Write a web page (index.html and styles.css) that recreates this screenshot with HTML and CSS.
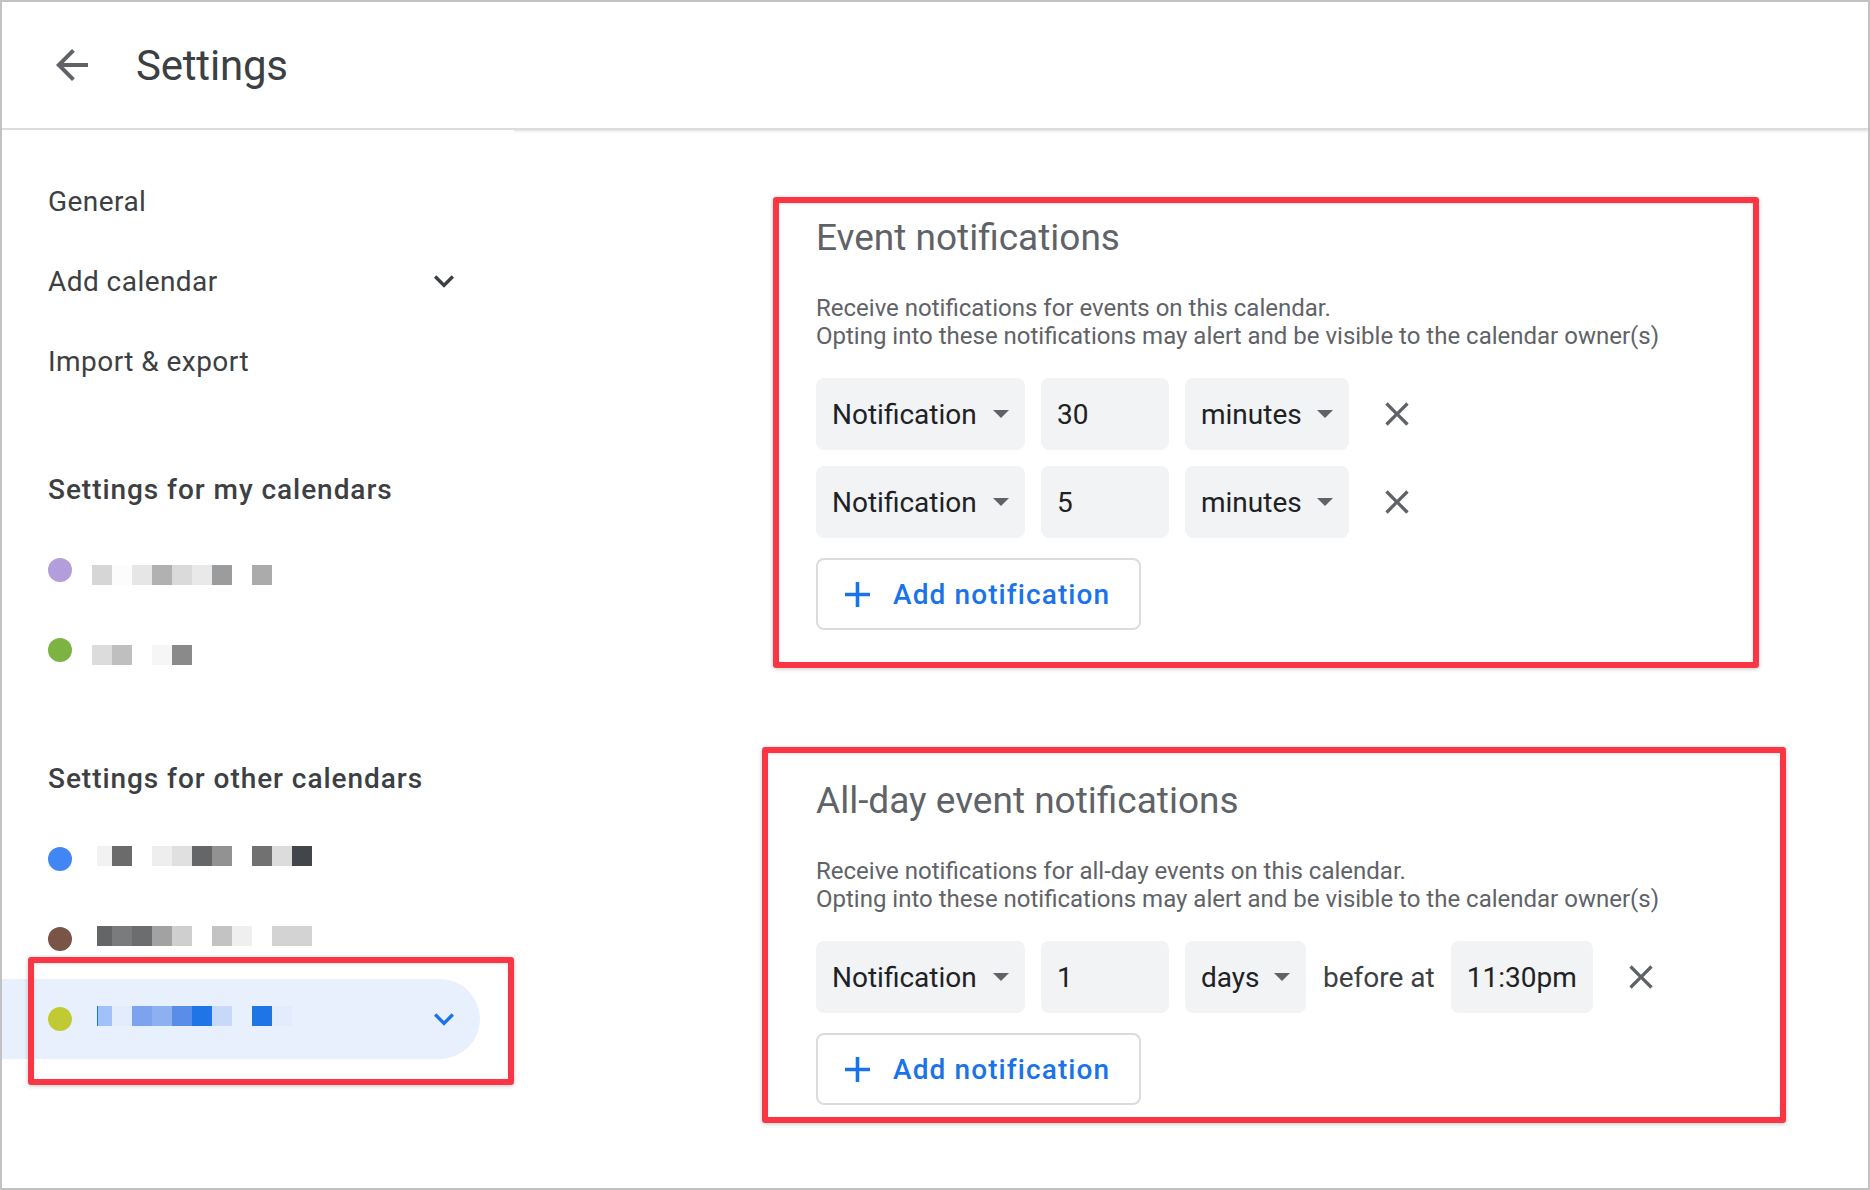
FILE: index.html
```html
<!DOCTYPE html>
<html lang="en">
<head>
<meta charset="utf-8">
<title>Settings</title>
<link rel="stylesheet" href="styles.css">
</head>
<body>
<div class="frame">
  <header class="topbar">
    <button class="icon-btn back" aria-label="Back">
      <svg viewBox="0 0 24 24" width="48" height="48"><path d="M20 11H7.830l5.590-5.590L12 4l-8 8 8 8 1.410-1.410L7.830 13H20v-2z"/></svg>
    </button>
    <h1 class="title">Settings</h1>
  </header>

  <div class="layout">
    <nav class="sidebar">
      <ul class="nav">
        <li class="nav-item">General</li>
        <li class="nav-item">Add calendar
          <span class="chev"><svg viewBox="0 0 24 24" width="40" height="40"><path d="M16.59 8.59L12 13.17 7.41 8.59 6 10l6 6 6-6z"/></svg></span>
        </li>
        <li class="nav-item">Import &amp; export</li>
      </ul>

      <div class="group">
        <h2 class="group-title">Settings for my calendars</h2>
        <div class="cal-row"><span class="dot dot-purple"></span><span class="pix pix-purple low"></span></div>
        <div class="cal-row"><span class="dot dot-green"></span><span class="pix pix-green low"></span></div>
      </div>

      <div class="group">
        <h2 class="group-title">Settings for other calendars</h2>
        <div class="cal-row"><span class="dot dot-blue"></span><span class="pix pix-blue high"></span></div>
        <div class="cal-row"><span class="dot dot-brown"></span><span class="pix pix-brown high"></span></div>
        <div class="cal-row selected"><span class="dot dot-lime"></span><span class="pix pix-lime high"></span>
          <span class="chev blue"><svg viewBox="0 0 24 24" width="40" height="40"><path d="M16.59 8.59L12 13.17 7.41 8.59 6 10l6 6 6-6z"/></svg></span>
        </div>
      </div>
    </nav>

    <main class="content">
      <section class="panel">
        <h3 class="panel-title">Event notifications</h3>
        <p class="panel-desc">Receive notifications for events on this calendar.<br>Opting into these notifications may alert and be visible to the calendar owner(s)</p>
        <div class="rows">
          <div class="row">
            <div class="field w-type"><span>Notification</span><svg class="caret" viewBox="7 10 10 5" width="16" height="8"><path d="M7 10l5 5 5-5z"/></svg></div>
            <div class="field w-num"><span>30</span></div>
            <div class="field w-min"><span>minutes</span><svg class="caret" viewBox="7 10 10 5" width="16" height="8"><path d="M7 10l5 5 5-5z"/></svg></div>
            <button class="icon-btn close" aria-label="Remove"><svg viewBox="0 0 24 24" width="40" height="40"><path d="M19 6.41L17.59 5 12 10.59 6.41 5 5 6.41 10.59 12 5 17.59 6.41 19 12 13.41 17.59 19 19 17.59 13.41 12z"/></svg></button>
          </div>
          <div class="row">
            <div class="field w-type"><span>Notification</span><svg class="caret" viewBox="7 10 10 5" width="16" height="8"><path d="M7 10l5 5 5-5z"/></svg></div>
            <div class="field w-num"><span>5</span></div>
            <div class="field w-min"><span>minutes</span><svg class="caret" viewBox="7 10 10 5" width="16" height="8"><path d="M7 10l5 5 5-5z"/></svg></div>
            <button class="icon-btn close" aria-label="Remove"><svg viewBox="0 0 24 24" width="40" height="40"><path d="M19 6.41L17.59 5 12 10.59 6.41 5 5 6.41 10.59 12 5 17.59 6.41 19 12 13.41 17.59 19 19 17.59 13.41 12z"/></svg></button>
          </div>
        </div>
        <button class="add-btn"><svg viewBox="5 5 14 14" width="25" height="25"><path d="M19 13h-6v6h-2v-6H5v-2h6V5h2v6h6v2z"/></svg><span>Add notification</span></button>
      </section>

      <section class="panel">
        <h3 class="panel-title">All-day event notifications</h3>
        <p class="panel-desc">Receive notifications for all-day events on this calendar.<br>Opting into these notifications may alert and be visible to the calendar owner(s)</p>
        <div class="rows">
          <div class="row">
            <div class="field w-type"><span>Notification</span><svg class="caret" viewBox="7 10 10 5" width="16" height="8"><path d="M7 10l5 5 5-5z"/></svg></div>
            <div class="field w-num"><span>1</span></div>
            <div class="field w-days"><span>days</span><svg class="caret" viewBox="7 10 10 5" width="16" height="8"><path d="M7 10l5 5 5-5z"/></svg></div>
            <span class="row-text">before at</span>
            <div class="field w-time"><span>11:30pm</span></div>
            <button class="icon-btn close" aria-label="Remove"><svg viewBox="0 0 24 24" width="40" height="40"><path d="M19 6.41L17.59 5 12 10.59 6.41 5 5 6.41 10.59 12 5 17.59 6.41 19 12 13.41 17.59 19 19 17.59 13.41 12z"/></svg></button>
          </div>
        </div>
        <button class="add-btn"><svg viewBox="5 5 14 14" width="25" height="25"><path d="M19 13h-6v6h-2v-6H5v-2h6V5h2v6h6v2z"/></svg><span>Add notification</span></button>
      </section>
    </main>
  </div>

  <div class="annot annot-1"></div>
  <div class="annot annot-2"></div>
  <div class="annot annot-3"></div>
</div>
</body>
</html>
```

FILE: styles.css
```css
* { box-sizing: border-box; }

html, body {
  margin: 0;
  padding: 0;
  background: #ffffff;
}

body {
  font-family: Roboto, "Liberation Sans", Arial, sans-serif;
  color: #3c4043;
}

.frame {
  position: relative;
  width: 1870px;
  height: 1190px;
  border: 2px solid #c2c2c2;
  overflow: hidden;
  background: #ffffff;
}

/* ---------- header ---------- */
.topbar {
  height: 128px;
  display: flex;
  align-items: center;
  gap: 40px;
  padding-left: 46px;
  border-bottom: 2px solid #dadce0;
}

.icon-btn {
  border: 0;
  background: transparent;
  padding: 0;
  width: 48px;
  height: 48px;
  display: flex;
  align-items: center;
  justify-content: center;
  fill: #5f6368;
  cursor: pointer;
}

.back svg { fill: #5f6368; }

.title {
  margin: 0;
  font-size: 42px;
  font-weight: 400;
  color: #3c4043;
  letter-spacing: -0.2px;
}

/* ---------- layout ---------- */
.layout {
  display: flex;
  height: calc(100% - 128px);
}

.sidebar {
  width: 512px;
  flex: none;
  padding-top: 31px;
}

.nav {
  list-style: none;
  margin: 0;
  padding: 0;
  width: 478px;
}

.nav-item {
  height: 80px;
  display: flex;
  align-items: center;
  justify-content: space-between;
  padding: 0 12px 0 46px;
  font-size: 28px;
  letter-spacing: 0.45px;
  color: #3c4043;
}

.chev {
  width: 48px;
  height: 48px;
  display: flex;
  align-items: center;
  justify-content: center;
  fill: #3c4043;
}
.chev.blue { fill: #1a73e8; margin-left: auto; }

.group {
  margin-top: 49px;
  width: 478px;
}

.group-title {
  margin: 0;
  height: 80px;
  line-height: 80px;
  padding-left: 46px;
  font-size: 28px;
  font-weight: 500;
  letter-spacing: 0.95px;
  color: #3c4043;
}

.cal-row {
  height: 80px;
  display: flex;
  align-items: center;
  padding: 0 12px 0 46px;
}

.cal-row.selected {
  background: #e8f0fe;
  border-radius: 0 40px 40px 0;
}

.dot {
  width: 24px;
  height: 24px;
  border-radius: 50%;
  flex: none;
}
.dot-purple { background: #b39ddb; }
.dot-green { background: #7cb342; }
.dot-blue { background: #4285f4; }
.dot-brown { background: #795548; }
.dot-lime { background: #c0ca33; }

.pix {
  height: 20px;
  flex: none;
}
.pix.low { margin-left: 20px; margin-top: 10px; }
.pix.high { margin-left: 25px; margin-bottom: 6px; }

.pix-purple {
  width: 180px;
  background: linear-gradient(to right,
    #d5d6d5 0 20px, #fcfcfc 20px 40px, #e6e6e6 40px 60px, #b1b1b1 60px 80px,
    #dadada 80px 100px, #e8e9e8 100px 120px, #9b9c9d 120px 140px,
    #ffffff 140px 160px, #ababab 160px 180px);
}
.pix-green {
  width: 100px;
  background: linear-gradient(to right,
    #dcdcdc 0 20px, #bebfbe 20px 40px, #ffffff 40px 60px, #f5f6f5 60px 80px,
    #8a8a8b 80px 100px);
}
.pix-blue {
  width: 215px;
  background: linear-gradient(to right,
    #f2f2f2 0 15px, #6b6b6b 15px 35px, #ffffff 35px 55px, #eeeeee 55px 75px,
    #e0e0e0 75px 95px, #646667 95px 115px, #929292 115px 135px,
    #ffffff 135px 155px, #717171 155px 175px, #dcdcdc 175px 195px,
    #424549 195px 215px);
}
.pix-brown {
  width: 215px;
  background: linear-gradient(to right,
    #646566 0 15px, #7a7b7c 15px 35px, #6c6d6f 35px 55px, #a2a2a2 55px 75px,
    #cfcfcf 75px 95px, #ffffff 95px 115px, #c3c3c3 115px 135px,
    #efefef 135px 155px, #ffffff 155px 175px, #d3d3d3 175px 215px);
}
.pix-lime {
  width: 215px;
  background: linear-gradient(to right,
    #1a73e8 0 1px, #a0c2f8 1px 15px, #e3ecfc 15px 35px, #7ba3ee 35px 55px,
    #8db0f0 55px 75px, #5a8dea 75px 95px, #1f75e6 95px 115px,
    #c6d9f8 115px 135px, transparent 135px 155px, #1f75e6 155px 175px,
    #e3ecfc 175px 195px, transparent 195px 215px);
}

/* ---------- content ---------- */
.content {
  flex: 1;
  padding: 86px 0 0 302px;
  box-shadow: inset 0 3px 3px -2px rgba(60, 64, 67, 0.18);
}

.panel + .panel { margin-top: 149px; }

.panel-title {
  margin: 0;
  font-size: 37px;
  line-height: 44px;
  font-weight: 400;
  color: #5f6368;
}

.panel-desc {
  margin: 34px 0 0;
  font-size: 24px;
  line-height: 28px;
  color: #5f6368;
}

.rows {
  margin-top: 28px;
  display: flex;
  flex-direction: column;
  gap: 16px;
}

.row {
  display: flex;
  align-items: center;
  gap: 16px;
  height: 72px;
}

.field {
  height: 72px;
  background: #f1f3f4;
  border-radius: 8px;
  padding: 0 16px;
  display: flex;
  align-items: center;
  justify-content: space-between;
  font-size: 28px;
  color: #202124;
  flex: none;
}

.caret { fill: #5f6368; flex: none; }

.w-type { width: 209px; }
.w-num { width: 128px; }
.w-min { width: 164px; }
.w-days { width: 121px; }
.w-time { width: 142px; }

.row-text {
  font-size: 28px;
  color: #3c4043;
  margin-left: 1px;
}

.close { margin-left: 8px; }
.close svg { fill: #5f6368; }

.add-btn {
  margin-top: 20px;
  width: 325px;
  height: 72px;
  border: 2px solid #dadce0;
  border-radius: 8px;
  background: #ffffff;
  display: flex;
  align-items: center;
  gap: 23px;
  padding: 0 0 0 27px;
  font-family: Roboto, "Liberation Sans", Arial, sans-serif;
  font-size: 28px;
  font-weight: 500;
  letter-spacing: 1.1px;
  color: #1a73e8;
  fill: #1a73e8;
  cursor: pointer;
}

/* ---------- annotation boxes ---------- */
.annot {
  position: absolute;
  border: 6px solid #fc3545;
  border-radius: 3px;
  box-shadow: 0 1px 4px rgba(0, 0, 0, 0.22), inset 0 1px 3px rgba(0, 0, 0, 0.12);
  pointer-events: none;
}
.annot-1 { left: 771px; top: 195px; width: 986px; height: 471px; }
.annot-2 { left: 760px; top: 745px; width: 1024px; height: 376px; }
.annot-3 { left: 26px; top: 955px; width: 486px; height: 128px; }
```
